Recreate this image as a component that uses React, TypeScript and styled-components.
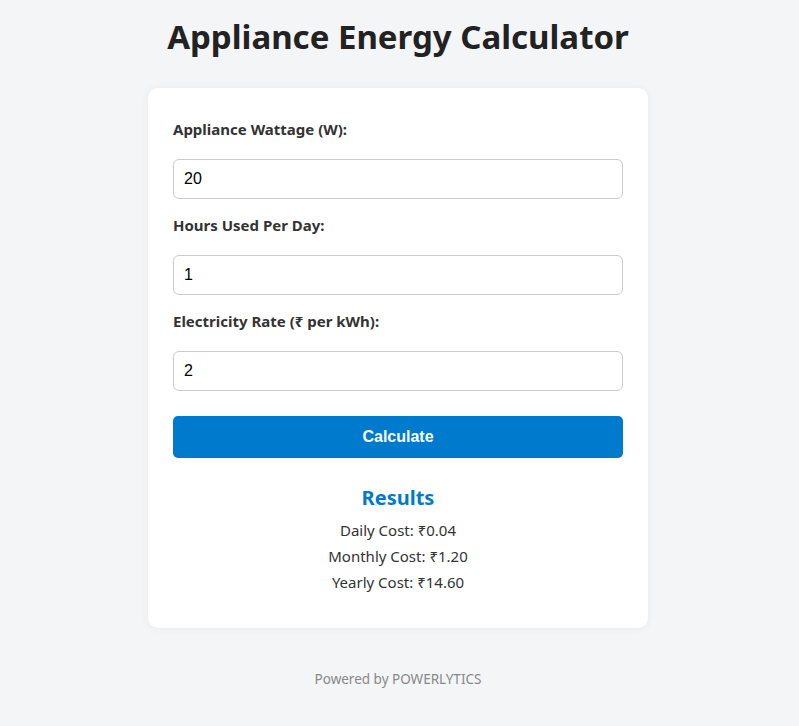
import React, { useState } from "react";
import styled, { createGlobalStyle } from "styled-components";

const GlobalStyle = createGlobalStyle`
  body {
    margin: 0;
    background-color: #f4f5f7;
    font-family: "Noto Sans", "Open Sans", sans-serif;
    color: #222;
  }
`;

const Page = styled.div`
  display: flex;
  flex-direction: column;
  align-items: center;
  padding: 15px 3px 0 0;
`;

const Title = styled.h1`
  margin: 0 0 29px;
  font-size: 33px;
  line-height: 44px;
  font-weight: 700;
  color: #222;
`;

const Card = styled.div`
  box-sizing: border-box;
  width: 500px;
  background: #fff;
  border-radius: 10px;
  padding: 31px 25px 33px;
  box-shadow: 0 0 10px rgba(0, 0, 0, 0.05);
`;

const Field = styled.div`
  display: flex;
  flex-direction: column;
  gap: 20px;
  margin-bottom: 16px;
`;

const Label = styled.label`
  font-size: 15px;
  line-height: 20px;
  font-weight: 700;
  color: #333;
`;

const Input = styled.input`
  box-sizing: border-box;
  width: 100%;
  height: 40px;
  padding: 0 10px;
  border: 1px solid #ccc;
  border-radius: 6px;
  font-family: "Liberation Sans", Arial, sans-serif;
  font-size: 16px;
  color: #000;
  outline: none;
`;

const Button = styled.button`
  width: 100%;
  height: 42px;
  margin-top: 9px;
  border: none;
  border-radius: 5px;
  background-color: #007acc;
  color: #fff;
  font-family: "Liberation Sans", Arial, sans-serif;
  font-size: 16px;
  font-weight: 700;
  cursor: pointer;
`;

const Results = styled.div`
  margin-top: 27px;
  text-align: center;
`;

const ResultsTitle = styled.h3`
  margin: 0 0 6px;
  font-size: 20px;
  line-height: 26px;
  font-weight: 700;
  color: #007acc;
`;

const ResultLine = styled.p`
  margin: 0;
  font-size: 15px;
  line-height: 26px;
  color: #333;
`;

const Footer = styled.footer`
  margin-top: 41px;
  font-size: 13.5px;
  line-height: 20px;
  color: #888;
`;

const App: React.FC = () => {
  const [watts, setWatts] = useState("20");
  const [hours, setHours] = useState("1");
  const [rate, setRate] = useState("2");
  const [result, setResult] = useState({ daily: 0.04, monthly: 1.2, yearly: 14.6 });

  const calculate = () => {
    const daily = ((Number(watts) * Number(hours)) / 1000) * Number(rate);
    setResult({ daily, monthly: daily * 30, yearly: daily * 365 });
  };

  return (
    <>
      <GlobalStyle />
      <Page>
        <Title>Appliance Energy Calculator</Title>
        <Card>
          <Field>
            <Label>Appliance Wattage (W):</Label>
            <Input type="number" value={watts} onChange={(e) => setWatts(e.target.value)} />
          </Field>
          <Field>
            <Label>Hours Used Per Day:</Label>
            <Input type="number" value={hours} onChange={(e) => setHours(e.target.value)} />
          </Field>
          <Field>
            <Label>Electricity Rate (₹ per kWh):</Label>
            <Input type="number" value={rate} onChange={(e) => setRate(e.target.value)} />
          </Field>
          <Button onClick={calculate}>Calculate</Button>
          <Results>
            <ResultsTitle>Results</ResultsTitle>
            <ResultLine>Daily Cost: ₹{result.daily.toFixed(2)}</ResultLine>
            <ResultLine>Monthly Cost: ₹{result.monthly.toFixed(2)}</ResultLine>
            <ResultLine>Yearly Cost: ₹{result.yearly.toFixed(2)}</ResultLine>
          </Results>
        </Card>
        <Footer>Powered by POWERLYTICS</Footer>
      </Page>
    </>
  );
};

export default App;
